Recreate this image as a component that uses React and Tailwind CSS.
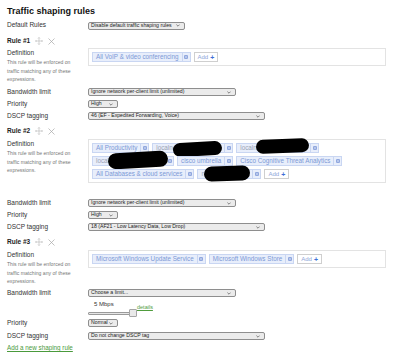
import React from "react";

function Chevron() {
  return (
    <svg width="4" height="3" viewBox="0 0 4 3" className="shrink-0">
      <path d="M0.4 0.6 L2 2.2 L3.6 0.6" stroke="#555" strokeWidth="0.7" fill="none" />
    </svg>
  );
}

function Select({ w, children }) {
  return (
    <div className={`flex items-center justify-between h-[8px] rounded-[2px] border border-[#8e8e8e] bg-[#ebebeb] pl-[2px] pr-[4px] text-[5.2px] leading-none text-[#222] ${w}`}>
      <span className="whitespace-nowrap">{children}</span>
      <Chevron />
    </div>
  );
}

function XBox() {
  return (
    <svg width="4" height="4" viewBox="0 0 4 4">
      <rect x="0.3" y="0.3" width="3.4" height="3.4" fill="#6d8ad2" />
      <path d="M1 1 L3 3 M3 1 L1 3" stroke="#e8eefb" strokeWidth="0.6" />
    </svg>
  );
}

function Tag({ children, redacted, blob, w }) {
  return (
    <div className="relative flex h-[10px] border border-[#c9d6f2] bg-[#e8eefb] shrink-0">
      <div className={`flex items-center px-[3px] text-[6.3px] leading-none whitespace-nowrap overflow-hidden ${redacted ? "text-[#9aa3b5]" : "text-[#7c99d6]"} ${w || ""}`}>
        {children}
      </div>
      <div className="flex items-center justify-center w-[8px] border-l border-[#c9d6f2]">
        <XBox />
      </div>
      {blob}
    </div>
  );
}

function Add() {
  return (
    <div className="flex items-center h-[10px] px-[3px] gap-[2px] border border-[#cfcfcf] bg-white text-[6px] leading-none shrink-0">
      <span className="text-[#8ea5d8]">Add</span>
      <span className="text-[#3e6fd6] font-bold text-[7px]">+</span>
    </div>
  );
}

function Label({ children }) {
  return <div className="w-[81px] shrink-0 text-[6.5px] text-[#333] leading-none">{children}</div>;
}

function Row({ label, children, cls }) {
  return (
    <div className={`flex items-center h-[12px] ${cls || ""}`}>
      <Label>{label}</Label>
      {children}
    </div>
  );
}

function Move() {
  return (
    <svg width="8" height="8" viewBox="0 0 8 8" fill="none" stroke="#b5b5b5" strokeWidth="0.6">
      <path d="M4 0.5 V7.5 M0.5 4 H7.5" />
      <path d="M3 1.5 L4 0.5 L5 1.5 M3 6.5 L4 7.5 L5 6.5 M1.5 3 L0.5 4 L1.5 5 M6.5 3 L7.5 4 L6.5 5" />
    </svg>
  );
}

function Cross() {
  return (
    <svg width="7" height="7" viewBox="0 0 7 7" fill="none" stroke="#a8a8a8" strokeWidth="0.7">
      <path d="M0.5 0.5 L6.5 6.5 M6.5 0.5 L0.5 6.5" />
    </svg>
  );
}

function RuleHeader({ n, cls }) {
  return (
    <div className={`flex items-center h-[12px] ${cls || ""}`}>
      <span className="text-[6.5px] font-bold text-[#222] leading-none">Rule #{n}</span>
      <span className="ml-[5px] flex"><Move /></span>
      <span className="ml-[5px] flex"><Cross /></span>
    </div>
  );
}

function DefLabel() {
  return (
    <div className="w-[81px] shrink-0">
      <div className="h-[10px] leading-[10px] text-[6.5px] text-[#333]">Definition</div>
      <div className="text-[5.1px] leading-[8.5px] text-[#777]">
        <div>This rule will be enforced on</div>
        <div>traffic matching any of these</div>
        <div>expressions.</div>
      </div>
    </div>
  );
}

function Blob({ cls }) {
  return <div className={`absolute bg-black rounded-full ${cls}`} />;
}

const box = "w-[298px] border border-[#e3e3e3] pl-[3px] pt-[3px] pb-[3px] flex flex-col gap-[3px]";

export default function App() {
  return (
    <div className="w-[400px] h-[359px] bg-white overflow-hidden px-[7px] font-['Liberation_Sans',Arial,sans-serif]">
      <div className="pt-[3px] h-[19px] text-[9px] font-bold leading-[16px] text-[#111]">Traffic shaping rules</div>
      <div className="flex items-center h-[11px] mt-[1px]">
        <Label>Default Rules</Label>
        <Select w="w-[97px]">Disable default traffic shaping rules</Select>
      </div>

      {/* Rule 1 */}
      <RuleHeader n={1} cls="mt-[4px]" />
      <div className="flex h-[38px] mt-[1px]">
        <DefLabel />
        <div className={`${box} self-start`}>
          <div className="flex gap-[3px]">
            <Tag>All VoIP &amp; video conferencing</Tag>
            <Add />
          </div>
        </div>
      </div>
      <Row label="Bandwidth limit"><Select w="w-[148px]">Ignore network per-client limit (unlimited)</Select></Row>
      <Row label="Priority"><Select w="w-[30px]">High</Select></Row>
      <Row label="DSCP tagging"><Select w="w-[177px]">46 (EF - Expedited Forwarding, Voice)</Select></Row>

      {/* Rule 2 */}
      <RuleHeader n={2} cls="mt-[3px]" />
      <div className="flex h-[58px] mt-[2px]">
        <DefLabel />
        <div className={`${box} self-start`}>
          <div className="flex gap-[3px]">
            <Tag>All Productivity</Tag>
            <Tag redacted w="w-[71px]" blob={<Blob cls="left-[20px] -top-[2px] w-[49px] h-[14px] -rotate-3" />}>localnet</Tag>
            <Tag redacted w="w-[73px]" blob={<Blob cls="left-[19px] -top-[5px] w-[53px] h-[14px] -rotate-2" />}>localnet</Tag>
          </div>
          <div className="flex gap-[3px]">
            <Tag redacted w="w-[72px]" blob={<Blob cls="left-[15px] -top-[5px] w-[60px] h-[16px] -rotate-3" />}>localnet</Tag>
            <Tag>cisco umbrella</Tag>
            <Tag>Cisco Cognitive Threat Analytics</Tag>
          </div>
          <div className="flex gap-[3px]">
            <Tag>All Databases &amp; cloud services</Tag>
            <Tag redacted w="w-[54px]" blob={<Blob cls="left-[6px] -top-[4px] w-[46px] h-[15px] -rotate-2" />}>n</Tag>
            <Add />
          </div>
        </div>
      </div>
      <Row label="Bandwidth limit"><Select w="w-[148px]">Ignore network per-client limit (unlimited)</Select></Row>
      <Row label="Priority"><Select w="w-[30px]">High</Select></Row>
      <Row label="DSCP tagging"><Select w="w-[177px]">18 (AF21 - Low Latency Data, Low Drop)</Select></Row>

      {/* Rule 3 */}
      <RuleHeader n={3} cls="mt-[3px]" />
      <div className="flex h-[37px] mt-[2px]">
        <DefLabel />
        <div className={`${box} self-start`}>
          <div className="flex gap-[3px]">
            <Tag>Microsoft Windows Update Service</Tag>
            <Tag>Microsoft Windows Store</Tag>
            <Add />
          </div>
        </div>
      </div>
      <div className="flex">
        <div className="w-[81px] shrink-0 h-[12px] flex items-center text-[6.5px] text-[#333] leading-none">Bandwidth limit</div>
        <div className="flex flex-col">
          <div className="h-[12px] flex items-center"><Select w="w-[148px]">Choose a limit...</Select></div>
          <div className="flex">
            <div className="flex flex-col w-[49px]">
              <div className="h-[10px] pl-[6px] flex items-center text-[6px] text-[#333] leading-none">5 Mbps</div>
              <div className="h-[8px] flex items-center">
                <div className="w-[42px] h-[3px] rounded-[1px] border border-[#9a9a9a] bg-[#e6e6e6]" />
                <div className="w-[8px] h-[8px] -ml-[1px] rounded-[1px] border border-[#a5a5a5] bg-[#e9e9e9]" />
              </div>
            </div>
            <div className="mt-[4px] h-[10px] flex items-center text-[5.5px] leading-none text-[#4f9c3c] underline">details</div>
          </div>
        </div>
      </div>
      <Row label="Priority"><Select w="w-[30px]">Normal</Select></Row>
      <Row label="DSCP tagging" cls="mt-[1px]"><Select w="w-[177px]">Do not change DSCP tag</Select></Row>
      <div className="mt-[1px] h-[10px] flex items-center text-[6.3px] font-medium leading-none text-[#4a9a3c] underline">Add a new shaping rule</div>
    </div>
  );
}
